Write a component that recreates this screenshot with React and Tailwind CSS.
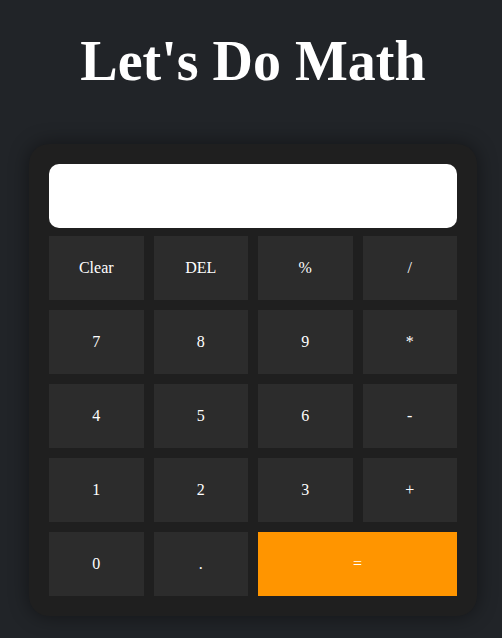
import React from 'react';

const keys = [
  { label: 'Clear' },
  { label: 'DEL' },
  { label: '%' },
  { label: '/' },
  { label: '7' },
  { label: '8' },
  { label: '9' },
  { label: '*' },
  { label: '4' },
  { label: '5' },
  { label: '6' },
  { label: '-' },
  { label: '1' },
  { label: '2' },
  { label: '3' },
  { label: '+' },
  { label: '0' },
  { label: '.' },
  { label: '=', wide: true },
];

const App = () => {
  return (
    <div
      className="min-h-[638px] bg-[#212428] flex flex-col items-center text-white pl-1"
      style={{ fontFamily: '"Liberation Serif", "Times New Roman", serif' }}
    >
      <h1 className="pt-[29px] text-[56px] leading-[64px] font-bold">Let's Do Math</h1>

      <div className="mt-[51px] w-[448px] bg-[#1f1f1f] rounded-[20px] p-5 shadow-[0_0_20px_rgba(0,0,0,0.45)]">
        <div className="h-16 bg-white rounded-[10px] mb-2"></div>
        <div className="grid grid-cols-4 gap-[10px]">
          {keys.map((k) => (
            <button
              key={k.label}
              className={
                k.wide
                  ? 'col-span-2 h-16 bg-[#ff9500] text-white text-base'
                  : 'h-16 bg-[#2c2c2c] text-white text-base'
              }
            >
              {k.label}
            </button>
          ))}
        </div>
      </div>
    </div>
  );
};

export default App;
